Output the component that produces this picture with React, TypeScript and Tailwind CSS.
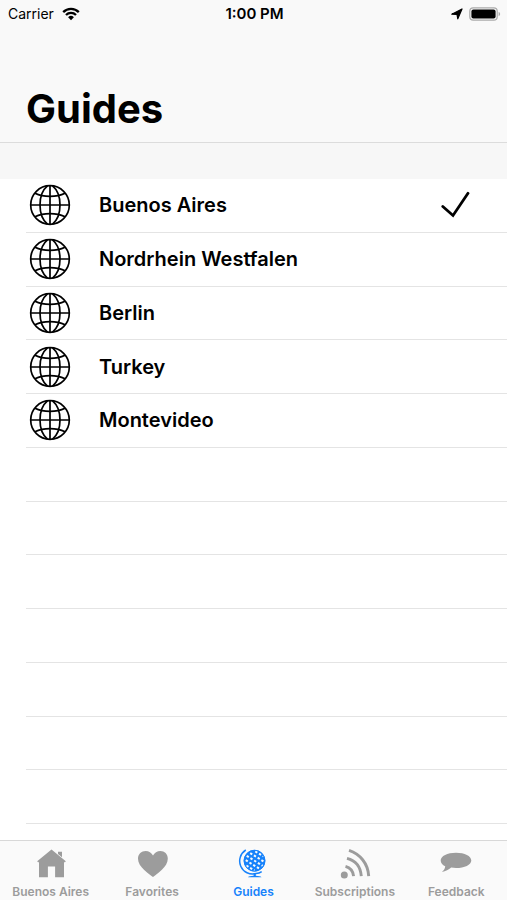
import React, { useState } from 'react';

type TabId = 'home' | 'favorites' | 'guides' | 'subscriptions' | 'feedback';

const GUIDES = ['Buenos Aires', 'Nordrhein Westfalen', 'Berlin', 'Turkey', 'Montevideo'];
const EMPTY_ROWS = 7;

const WifiIcon = () => (
  <svg viewBox="0 0 18 14" className="h-[14px] w-[18px]" fill="none" stroke="currentColor" strokeWidth="2.3" aria-hidden="true">
    <path d="M1.2 5.1a11 11 0 0 1 15.6 0" />
    <path d="M4 8a7 7 0 0 1 10 0" />
    <path d="M9 13.2 6.1 10.2a4.1 4.1 0 0 1 5.8 0Z" fill="currentColor" stroke="none" />
  </svg>
);

const LocationIcon = () => (
  <svg viewBox="0 0 12 12" className="h-3 w-3" fill="currentColor" stroke="currentColor" strokeWidth="1.2" strokeLinejoin="round" aria-hidden="true">
    <path d="M11 1 6.8 10.8 6 6.4.8 6.2Z" />
  </svg>
);

const BatteryIcon = () => (
  <svg viewBox="0 0 32 16" className="h-4 w-8" aria-hidden="true">
    <rect x="0.8" y="1.8" width="27.4" height="12.4" rx="3.4" fill="none" stroke="#aaa" strokeWidth="1.2" />
    <rect x="2.4" y="3.4" width="24.2" height="9.2" rx="2" fill="#000" />
    <path d="M29.6 6v4.2c1-.3 1.5-1.1 1.5-2.1S30.6 6.3 29.6 6Z" fill="#aaa" />
  </svg>
);

const GlobeIcon = () => (
  <svg viewBox="0 0 42 42" className="h-[42px] w-[42px]" fill="none" stroke="currentColor" strokeWidth="1.7" aria-hidden="true">
    <circle cx="21" cy="21" r="19.3" />
    <path d="M21 1.7v38.6M1.7 21h38.6" />
    <path d="M18.500 1.900C8.500 10 8.500 32 18.500 40.100M23.500 1.900c10 8.100 10 30.100 0 38.200" />
    <path d="M6 9.300c8.500 4.200 21.500 4.200 30 0M6 32.700c8.500-4.200 21.500-4.200 30 0" />
  </svg>
);

const CheckIcon = () => (
  <svg viewBox="0 0 30 28" className="h-7 w-[30px]" fill="none" stroke="currentColor" strokeWidth="2.8" strokeLinecap="round" aria-hidden="true">
    <path d="m1.800 15.500 10.200 9L27 2.300" />
  </svg>
);

const HomeIcon = () => (
  <svg viewBox="0 0 32 32" className="h-8 w-8" fill="currentColor" aria-hidden="true">
    <path d="M16.500 2.500 30.800 14.200l-1 1.200-.8-.6V30.300h-8.900V19.500h-7.200v10.800H4V14.800l-.8.600-1-1.200Z" />
    <path d="M23 4.700h4v5.600l-4-3.400Z" />
  </svg>
);

const HeartIcon = () => (
  <svg viewBox="0 0 32 32" className="h-8 w-8" fill="currentColor" aria-hidden="true">
    <path d="M17 30C13 26.800 2 20 2 11.700 2 6.800 5.500 3.900 9.600 3.900c3.200 0 6 1.800 7.400 4.700 1.400-2.900 4.200-4.700 7.400-4.700 4.100 0 7.400 2.900 7.400 7.800C31.800 20 21 26.800 17 30Z" />
  </svg>
);

const DeskGlobeIcon = () => (
  <svg viewBox="0 0 32 32" className="h-8 w-8" fill="none" stroke="currentColor" aria-hidden="true">
    <circle cx="17.500" cy="13.700" r="10.700" fill="currentColor" stroke="none" />
    <g stroke="#fafafa" strokeWidth="2" strokeDasharray="2.400 2" transform="rotate(32 17.500 13.700)">
      <path d="M13.200 5.300h9.600M9.800 9.500h16.500M8.300 13.700h18.800M9.800 17.900h16.500M13.200 22.100h9.600" />
    </g>
    <circle cx="17.500" cy="13.700" r="10.500" strokeWidth="1" />
    <path d="M8.800 3A13 13 0 0 0 19 26.600c2.300-.2 4-.8 5.700-2" strokeWidth="1.500" />
    <path d="M16.600 26.300h2.200v2.400c2.900.1 5 .5 5.700 1.500H11c.7-1 2.700-1.400 5.600-1.500Z" fill="currentColor" stroke="none" />
  </svg>
);

const FeedIcon = () => (
  <svg viewBox="0 0 32 32" className="h-8 w-8" fill="none" stroke="currentColor" strokeWidth="2.900" aria-hidden="true">
    <circle cx="5.300" cy="28" r="3.500" fill="currentColor" stroke="none" />
    <path d="M6.500 19.400c4.500 1.200 7.500 4.600 8.100 9.700M8 11.400c8 2 13.500 8.300 14.300 17.700M10 3.400c10.800 3.600 19 12.800 19.700 25.700" />
  </svg>
);

const SpeechIcon = () => (
  <svg viewBox="0 0 32 32" className="h-8 w-8" fill="currentColor" aria-hidden="true">
    <path d="M16 5.700c8.600 0 15.300 3.400 15.300 7.700S24.600 21 16 21c-1.700 0-3.300-.1-4.800-.4-2.500 2.200-5.500 3.800-9.300 4.500 1.900-1.600 3.100-3.500 3.300-5.800C2.400 17.900.7 15.800.7 13.400.7 9.100 7.400 5.700 16 5.700Z" />
  </svg>
);

const TABS: { id: TabId; label: string; icon: React.ReactNode }[] = [
  { id: 'home', label: 'Buenos Aires', icon: <HomeIcon /> },
  { id: 'favorites', label: 'Favorites', icon: <HeartIcon /> },
  { id: 'guides', label: 'Guides', icon: <DeskGlobeIcon /> },
  { id: 'subscriptions', label: 'Subscriptions', icon: <FeedIcon /> },
  { id: 'feedback', label: 'Feedback', icon: <SpeechIcon /> },
];

const StatusBar = () => (
  <div className="grid h-7 grid-cols-3 items-center pl-2 pr-1.5 text-sm text-black">
    <div className="flex items-center gap-2">
      <span>Carrier</span>
      <WifiIcon />
    </div>
    <span className="text-center text-[15px] font-semibold">1:00 PM</span>
    <div className="flex items-center justify-end gap-1.5">
      <LocationIcon />
      <BatteryIcon />
    </div>
  </div>
);

const App: React.FC = () => {
  const [guide, setGuide] = useState('Buenos Aires');
  const [tab, setTab] = useState<TabId>('guides');

  return (
    <div className="flex min-h-screen flex-col bg-white font-['Inter',sans-serif] text-black">
      <header className="border-b border-[#dcdcdc] bg-[#f9f9f9]">
        <StatusBar />
        <h1 className="px-[26px] pt-14 pb-2 text-[40px] leading-[50px] font-bold">Guides</h1>
      </header>

      <main className="flex flex-1 flex-col">
        <div className="h-9 bg-[#f7f7f7]" />
        <ul className="grid flex-1 auto-rows-fr pb-4 pl-[26px]">
          {GUIDES.map(name => (
            <li key={name} className="flex border-b border-[#e4e4e4]">
              <button
                onClick={() => setGuide(name)}
                className="flex flex-1 items-center gap-7 pr-9 pl-[3px] text-left text-xl font-semibold"
              >
                <GlobeIcon />
                <span className="flex-1">{name}</span>
                {guide === name && <CheckIcon />}
              </button>
            </li>
          ))}
          {/* blank rows keep the separators going down to the tab bar */}
          {Array.from({ length: EMPTY_ROWS }, (_, i) => (
            <li key={i} aria-hidden="true" className="border-b border-[#e4e4e4]" />
          ))}
        </ul>
      </main>

      <nav className="grid grid-cols-5 border-t border-[#d8d8d8] bg-[#fafafa]">
        {TABS.map(t => (
          <button
            key={t.id}
            onClick={() => setTab(t.id)}
            className={`flex flex-col items-center gap-[5px] pt-1.5 text-xs font-semibold ${tab === t.id ? 'text-[#1682fb]' : 'text-[#9c9c9c]'}`}
          >
            {t.icon}
            <span className="whitespace-nowrap">{t.label}</span>
          </button>
        ))}
      </nav>
    </div>
  );
};

export default App;
